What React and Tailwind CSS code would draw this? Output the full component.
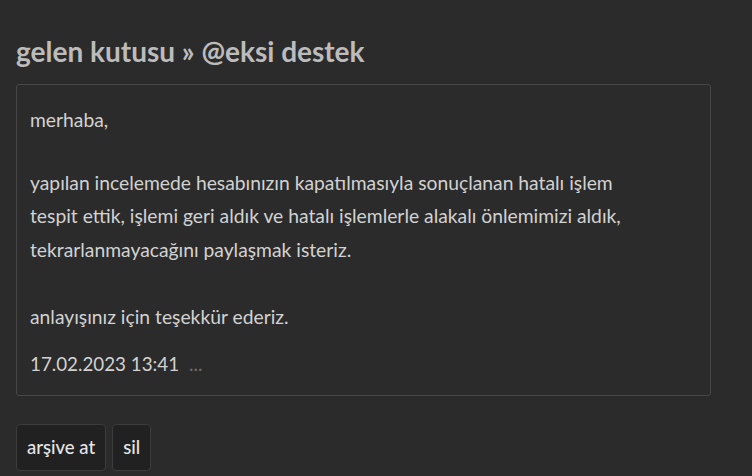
export default function App() {
  return (
    <div
      className="min-h-screen w-full bg-[#2b2b2b] px-4 pt-[33px]"
      style={{ fontFamily: "Lato, 'Open Sans', sans-serif" }}
    >
      <h1 className="text-[28px] font-bold leading-[36px] text-[#bcbcbc]">
        gelen kutusu » @eksi destek
      </h1>
      <div className="mt-[15px] w-[695px] rounded-[3px] border border-[#474747] px-[13px] pt-[18px] pb-[15px] text-[19.3px] text-[#d2d2d2]">
        <p className="leading-[33.5px]">merhaba,</p>
        <p className="mt-[29px] leading-[33.5px]">
          yapılan incelemede hesabınızın kapatılmasıyla sonuçlanan hatalı işlem
          <br />
          tespit ettik, işlemi geri aldık ve hatalı işlemlerle alakalı önlemimizi aldık,
          <br />
          tekrarlanmayacağını paylaşmak isteriz.
        </p>
        <p className="mt-[34px] leading-[33.5px]">anlayışınız için teşekkür ederiz.</p>
        <div className="mt-[13px] flex items-center gap-[10px] leading-[33.5px]">
          <span className="text-[18.8px]">17.02.2023 13:41</span>
          <span className="text-[19px] text-[#6f6f6f]">...</span>
        </div>
      </div>
      <div className="mt-[28px] flex gap-[6px]">
        <button className="h-[47px] rounded-[4px] border border-[#3c3c3c] bg-[#212121] px-[10px] text-[18.5px] font-medium text-[#e6e6e6]">
          arşive at
        </button>
        <button className="h-[47px] rounded-[4px] border border-[#3c3c3c] bg-[#212121] px-[10px] text-[18.5px] font-medium text-[#e6e6e6]">
          sil
        </button>
      </div>
    </div>
  );
}
